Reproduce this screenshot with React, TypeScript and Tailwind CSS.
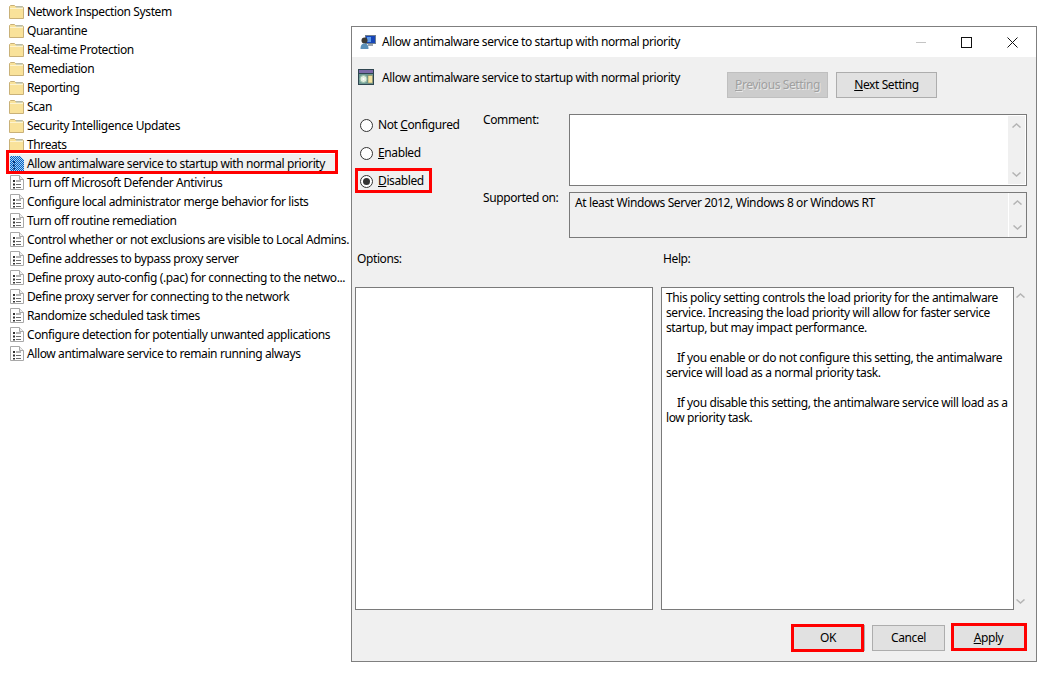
const folders = [
  "Network Inspection System",
  "Quarantine",
  "Real-time Protection",
  "Remediation",
  "Reporting",
  "Scan",
  "Security Intelligence Updates",
  "Threats",
]

const policies = [
  "Turn off Microsoft Defender Antivirus",
  "Configure local administrator merge behavior for lists",
  "Turn off routine remediation",
  "Control whether or not exclusions are visible to Local Admins.",
  "Define addresses to bypass proxy server",
  "Define proxy auto-config (.pac) for connecting to the netwo...",
  "Define proxy server for connecting to the network",
  "Randomize scheduled task times",
  "Configure detection for potentially unwanted applications",
  "Allow antimalware service to remain running always",
]

const helpLines = [
  "This policy setting controls the load priority for the antimalware",
  "service. Increasing the load priority will allow for faster service",
  "startup, but may impact performance.",
  "",
  "    If you enable or do not configure this setting, the antimalware",
  "service will load as a normal priority task.",
  "",
  "    If you disable this setting, the antimalware service will load as a",
  "low priority task.",
]

const FolderIcon = () => (
  <svg width="15" height="14" viewBox="0 0 15 14" className="shrink-0">
    <path d="M0.5 13.5V1.5l1-1h4l1 1h7l1 1v11z" fill="#f9e29a" stroke="#c9b178" />
    <rect x="1" y="3" width="13" height="1" fill="#fdf3cf" />
    <rect x="7" y="1.5" width="6.5" height="1" fill="#a9c3d6" />
  </svg>
)

const PolicyIcon = () => (
  <svg width="14" height="15" viewBox="0 0 14 15" className="shrink-0">
    <path d="M0.5 0.5h9l4 4v10h-13z" fill="#fff" stroke="#a8a8a8" />
    <path d="M9.5 0.5v4h4" fill="#eee" stroke="#a8a8a8" />
    <path d="M3 5h2v2h-2zM3 8.5h2v2h-2zM3 12h2v1.5h-2z" fill="#333" />
    <path d="M6 6h5M6 9.5h5M6 12.5h5" stroke="#6c6c6c" />
  </svg>
)

const SelectedPolicyIcon = () => (
  <svg width="14" height="15" viewBox="0 0 14 15" className="shrink-0">
    <defs>
      <pattern id="dither" width="2" height="2" patternUnits="userSpaceOnUse">
        <rect width="2" height="2" fill="#0560c4" />
        <rect width="1" height="1" fill="#a4d0f4" />
        <rect x="1" y="1" width="1" height="1" fill="#a4d0f4" />
      </pattern>
    </defs>
    <path d="M0 0h10l4 4v11h-14z" fill="url(#dither)" />
    <path d="M3 5h2v2h-2zM3 8.5h2v2h-2zM3 12h2v1.5h-2z" fill="#0d3a7a" />
  </svg>
)

const TitleIcon = () => (
  <svg width="16" height="16" viewBox="0 0 16 16" className="shrink-0">
    <rect x="5.5" y="1.5" width="10" height="8" fill="#1746b8" stroke="#6f7f90" />
    <rect x="7" y="3" width="4" height="5" fill="#5d9bea" />
    <rect x="8" y="10" width="5" height="2" fill="#9aa3ad" />
    <circle cx="4.5" cy="6.5" r="3" fill="#3d3a34" />
    <path d="M0.5 15c0-4 1.5-5.5 4-5.5s4 1.5 4 5.5z" fill="#5b90b8" />
  </svg>
)

const PolicyHeaderIcon = () => (
  <svg width="16" height="16" viewBox="0 0 16 16" className="shrink-0">
    <rect x="0" y="0" width="16" height="16" fill="#2f4650" />
    <rect x="1" y="1" width="14" height="3" fill="#7b6aa8" />
    <rect x="1" y="5" width="14" height="10" fill="#6f9a94" />
    <circle cx="5.5" cy="10" r="3.5" fill="#e3efe0" stroke="#9cc2ac" />
    <circle cx="5.5" cy="10" r="1" fill="#fff" />
    <rect x="10" y="6.5" width="4.5" height="7.5" fill="#f2e3a0" stroke="#7d7a55" strokeWidth="0.5" />
  </svg>
)

const Chevron = ({ up }: { up?: boolean }) => (
  <svg width="9" height="5" viewBox="0 0 9 5">
    <path d={up ? "M0.5 4.5L4.5 1l4 3.5" : "M0.5 0.5L4.5 4l4-3.5"} fill="none" stroke="#b4b4b4" strokeWidth="1.5" />
  </svg>
)

const ScrollTrack = ({ className }: { className: string }) => (
  <div className={`flex shrink-0 flex-col items-center justify-between bg-[#f0f0f0] ${className}`}>
    <Chevron up />
    <Chevron />
  </div>
)

const Radio = ({ checked, children }: { checked?: boolean; children: React.ReactNode }) => (
  <div className="flex h-[28px] items-center">
    <span className="flex h-[13px] w-[13px] items-center justify-center rounded-full border border-[#333] bg-white">
      {checked && <span className="h-[7px] w-[7px] rounded-full bg-[#333]" />}
    </span>
    <span className="ml-[5px]">{children}</span>
  </div>
)

const DialogButton = ({ children, className = "" }: { children: React.ReactNode; className?: string }) => (
  <div className={`flex h-[26px] items-center justify-center border border-[#adadad] bg-[#e1e1e1] ${className}`}>
    {children}
  </div>
)

const RedBox = ({ className }: { className: string }) => (
  <div className={`pointer-events-none absolute border-[3px] border-[#ff0000] ${className}`} />
)

const App = () => {
  return (
    <div className="relative flex h-[683px] w-[1048px] overflow-hidden bg-white font-['Noto_Sans','Open_Sans',sans-serif] text-[12px] leading-[16px] tracking-[-0.39px] text-black">
      <div className="w-[351px] shrink-0 whitespace-nowrap pl-[9px] pt-[2px]">
        {folders.map((name) => (
          <div key={name} className="flex h-[19px] items-center gap-[3px]">
            <FolderIcon />
            <span>{name}</span>
          </div>
        ))}
        <div className="flex h-[19px] w-[326px] items-center gap-[3px] bg-[#f0f0f0] pl-[1px]">
          <SelectedPolicyIcon />
          <span>Allow antimalware service to startup with normal priority</span>
        </div>
        {policies.map((name) => (
          <div key={name} className="flex h-[19px] items-center gap-[3px] pl-[1px]">
            <PolicyIcon />
            <span>{name}</span>
          </div>
        ))}
      </div>

      <div className="relative z-10 mt-[26px] flex h-[636px] w-[686px] shrink-0 flex-col border border-[#7f7f7f] bg-[#f0f0f0]">
        <div className="flex h-[30px] items-center bg-white pl-[8px]">
          <TitleIcon />
          <span className="ml-[6px] flex-1">Allow antimalware service to startup with normal priority</span>
          <svg width="10" height="11" viewBox="0 0 10 11" className="mr-[35px]">
            <path d="M0 5.5h10" stroke="#c4c4c4" />
          </svg>
          <svg width="11" height="11" viewBox="0 0 11 11" className="mr-[35px]">
            <rect x="0.5" y="0.5" width="10" height="10" fill="none" stroke="#111" />
          </svg>
          <svg width="11" height="11" viewBox="0 0 11 11" className="mr-[18px]">
            <path d="M0.5 0.5l10 10M10.5 0.5l-10 10" stroke="#111" />
          </svg>
        </div>

        <div className="flex h-[54px] items-start pl-[6px] pt-[12px]">
          <PolicyHeaderIcon />
          <span className="ml-[8px] w-[345px] pt-[1px]">Allow antimalware service to startup with normal priority</span>
          <div className="flex gap-[8px] pt-[3px]">
            <div className="flex h-[26px] w-[101px] items-center justify-center border border-[#bfbfbf] bg-[#cccccc] text-[#a0a0a0] [text-shadow:1px_1px_0_#e8e8e8]">
              <span><u>P</u>revious Setting</span>
            </div>
            <DialogButton className="w-[101px]">
              <span><u>N</u>ext Setting</span>
            </DialogButton>
          </div>
        </div>

        <div className="flex">
          <div className="w-[131px] pl-[8px]">
            <Radio>Not <u>C</u>onfigured</Radio>
            <Radio><u>E</u>nabled</Radio>
            <Radio checked><u>D</u>isabled</Radio>
          </div>
          <div className="pt-[3px]">
            <div className="flex h-[72px]">
              <span className="-mt-[2px] w-[86px]">Comment:</span>
              <div className="flex w-[458px] justify-end border border-[#7a7a7a] bg-white p-[1px]">
                <ScrollTrack className="w-[17px] py-[7px]" />
              </div>
            </div>
            <div className="mt-[6px] flex h-[46px]">
              <span className="-mt-[2px] w-[86px]">Supported on:</span>
              <div className="flex w-[458px] justify-between border border-[#7a7a7a] bg-[#f0f0f0] pl-[5px]">
                <span className="pt-[2px]">At least Windows Server 2012, Windows 8 or Windows RT</span>
                <ScrollTrack className="w-[18px] border-l border-white py-[7px]" />
              </div>
            </div>
          </div>
        </div>

        <div className="mt-[13px] flex h-[36px] pl-[5px]">
          <span className="w-[306px]">Options:</span>
          <span>Help:</span>
        </div>

        <div className="flex pl-[3px]">
          <div className="h-[323px] w-[298px] border border-[#7a7a7a] bg-white" />
          <div className="ml-[8px] h-[323px] w-[353px] whitespace-pre border border-[#7a7a7a] bg-white pl-[4px] pt-[2px] leading-[15px]">
            {helpLines.map((line, i) => (
              <div key={i} className="h-[15px]">{line}</div>
            ))}
          </div>
          <ScrollTrack className="h-[323px] w-[13px] py-[6px]" />
        </div>

        <div className="mt-[15px] flex justify-end gap-[7px] pr-[11px]">
          <DialogButton className="w-[73px] pr-[1px]">OK</DialogButton>
          <DialogButton className="w-[73px]">Cancel</DialogButton>
          <DialogButton className="w-[73px]"><span><u>A</u>pply</span></DialogButton>
        </div>
      </div>

      <RedBox className="left-[6px] top-[150px] z-20 h-[24px] w-[332px]" />
      <RedBox className="left-[355px] top-[168px] z-20 h-[25px] w-[77px]" />
      <RedBox className="left-[791px] top-[624px] z-20 h-[28px] w-[73px]" />
      <RedBox className="left-[951px] top-[623px] z-20 h-[28px] w-[76px]" />
    </div>
  )
}

export default App
